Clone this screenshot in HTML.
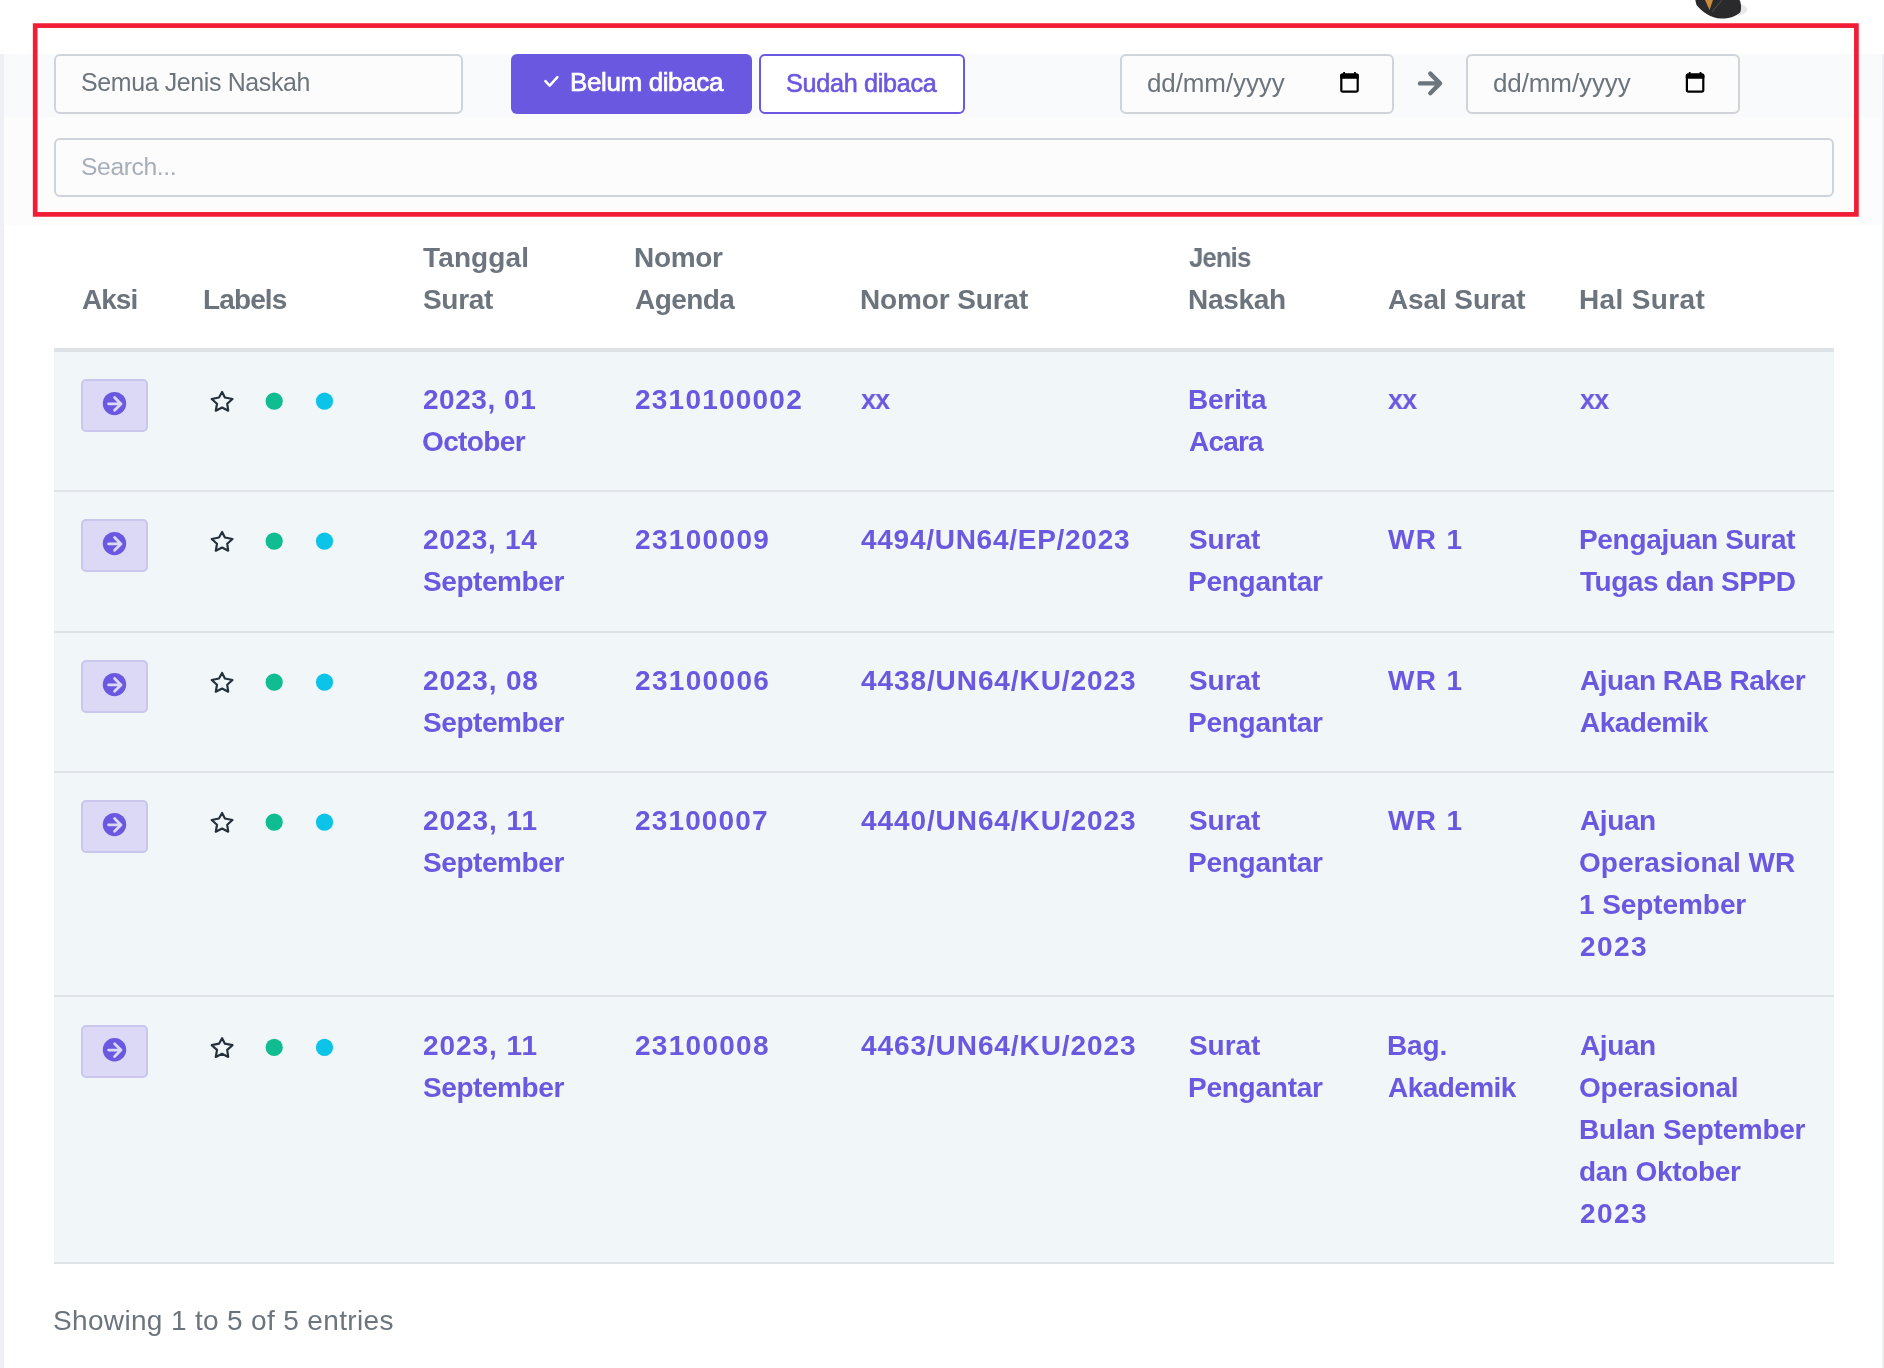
<!DOCTYPE html>
<html><head><meta charset="utf-8"><style>
html,body{margin:0;padding:0;background:#ffffff;}
#root{position:relative;width:1884px;height:1368px;overflow:hidden;background:#ffffff;font-family:"Liberation Sans",sans-serif;}
.t{position:absolute;white-space:nowrap;will-change:transform;}
.box{position:absolute;box-sizing:border-box;}
.ab{position:absolute;left:81px;width:67px;height:53px;box-sizing:border-box;border:2px solid #cac6ec;border-radius:5px;background:#dbd9f6;}
.rb{position:absolute;left:54px;width:1780px;height:2px;background:#dfe3e7;}
</style></head><body><div id="root">
<div class="box" style="left:0;top:54px;width:4px;height:1314px;background:#eef0f3"></div>
<div class="box" style="left:1882px;top:54px;width:2px;height:1314px;background:#eef0f3"></div>
<div class="box" style="left:4px;top:54px;width:1878px;height:63px;background:#f9fafb"></div>
<div class="box" style="left:4px;top:117px;width:1878px;height:108px;background:#fcfcfd"></div><div class="box" style="left:4px;top:225px;width:1878px;height:1143px;background:#ffffff"></div>
<div class="box" style="left:54px;top:54px;width:409px;height:60px;border:2px solid #ced4da;border-radius:6px;background:#fcfcfd"></div>
<div class="box" style="left:511px;top:54px;width:241px;height:60px;border-radius:6px;background:#6a58e0"></div>
<div class="box" style="left:759px;top:54px;width:206px;height:60px;border:2px solid #6a58e0;border-radius:6px;background:#ffffff"></div>
<div class="box" style="left:1120px;top:54px;width:274px;height:60px;border:2px solid #ced4da;border-radius:6px;background:#fcfcfd"></div>
<div class="box" style="left:1466px;top:54px;width:274px;height:60px;border:2px solid #ced4da;border-radius:6px;background:#fcfcfd"></div>
<div class="box" style="left:54px;top:138px;width:1780px;height:59px;border:2px solid #ced4da;border-radius:6px;background:#fcfcfd"></div>
<div class="box" style="left:54px;top:348px;width:1780px;height:4px;background:#dee2e6"></div>
<div class="box" style="left:54px;top:352px;width:1780px;height:910px;background:#f1f6f9"></div>
<div class="rb" style="top:490px"></div><div class="rb" style="top:631px"></div><div class="rb" style="top:771px"></div><div class="rb" style="top:995px"></div><div class="rb" style="top:1262px"></div>
<div class="ab" style="top:379.0px"></div><div class="ab" style="top:519.0px"></div><div class="ab" style="top:660.0px"></div><div class="ab" style="top:800.0px"></div><div class="ab" style="top:1025.2px"></div>
<svg width="1884" height="1368" style="position:absolute;left:0;top:0">
<g fill="none" stroke="#25303b" stroke-width="2.2" stroke-linejoin="round"><path d="M222.1 392.0 L224.9 397.5 L232.5 399.0 L227.2 403.7 L228.2 410.7 L222.1 407.6 L215.8 410.7 L217.0 403.7 L211.7 399.0 L219.0 397.5 Z"/><path d="M222.1 532.0 L224.9 537.5 L232.5 539.0 L227.2 543.7 L228.2 550.7 L222.1 547.6 L215.8 550.7 L217.0 543.7 L211.7 539.0 L219.0 537.5 Z"/><path d="M222.1 673.0 L224.9 678.5 L232.5 680.0 L227.2 684.7 L228.2 691.7 L222.1 688.6 L215.8 691.7 L217.0 684.7 L211.7 680.0 L219.0 678.5 Z"/><path d="M222.1 813.0 L224.9 818.5 L232.5 820.0 L227.2 824.7 L228.2 831.7 L222.1 828.6 L215.8 831.7 L217.0 824.7 L211.7 820.0 L219.0 818.5 Z"/><path d="M222.1 1038.2 L224.9 1043.7 L232.5 1045.2 L227.2 1049.9 L228.2 1056.9 L222.1 1053.8 L215.8 1056.9 L217.0 1049.9 L211.7 1045.2 L219.0 1043.7 Z"/></g>
<circle cx="274.2" cy="401.2" r="8.6" fill="#10bd90"/><circle cx="324.5" cy="401.2" r="8.6" fill="#0cc3e8"/><circle cx="274.2" cy="541.2" r="8.6" fill="#10bd90"/><circle cx="324.5" cy="541.2" r="8.6" fill="#0cc3e8"/><circle cx="274.2" cy="682.2" r="8.6" fill="#10bd90"/><circle cx="324.5" cy="682.2" r="8.6" fill="#0cc3e8"/><circle cx="274.2" cy="822.2" r="8.6" fill="#10bd90"/><circle cx="324.5" cy="822.2" r="8.6" fill="#0cc3e8"/><circle cx="274.2" cy="1047.4" r="8.6" fill="#10bd90"/><circle cx="324.5" cy="1047.4" r="8.6" fill="#0cc3e8"/>
<circle cx="114.5" cy="403.6" r="11.7" fill="#6a58e0"/><path d="M108.6 403.9 H121 M114.6 397.6 L121 403.9 L114.6 410.2" stroke="#dcd9f6" stroke-width="2.8" fill="none" stroke-linecap="round" stroke-linejoin="round"/><circle cx="114.5" cy="543.6" r="11.7" fill="#6a58e0"/><path d="M108.6 543.9 H121 M114.6 537.6 L121 543.9 L114.6 550.2" stroke="#dcd9f6" stroke-width="2.8" fill="none" stroke-linecap="round" stroke-linejoin="round"/><circle cx="114.5" cy="684.6" r="11.7" fill="#6a58e0"/><path d="M108.6 684.9 H121 M114.6 678.6 L121 684.9 L114.6 691.2" stroke="#dcd9f6" stroke-width="2.8" fill="none" stroke-linecap="round" stroke-linejoin="round"/><circle cx="114.5" cy="824.6" r="11.7" fill="#6a58e0"/><path d="M108.6 824.9 H121 M114.6 818.6 L121 824.9 L114.6 831.2" stroke="#dcd9f6" stroke-width="2.8" fill="none" stroke-linecap="round" stroke-linejoin="round"/><circle cx="114.5" cy="1049.8" r="11.7" fill="#6a58e0"/><path d="M108.6 1050.1 H121 M114.6 1043.8 L121 1050.1 L114.6 1056.4" stroke="#dcd9f6" stroke-width="2.8" fill="none" stroke-linecap="round" stroke-linejoin="round"/>
<path d="M545.4 81.2 L549.7 85.6 L557.4 77.2" stroke="#ffffff" stroke-width="2.5" fill="none" stroke-linecap="round" stroke-linejoin="round"/>
<g fill="none" stroke="#000" stroke-width="2.2">
<rect x="1341.3" y="74.6" width="16.4" height="17.1" rx="1.6"/>
<rect x="1686.9" y="74.6" width="16.4" height="17.1" rx="1.6"/>
</g>
<g fill="#000"><rect x="1340.2" y="73.6" width="18.6" height="5.2" rx="1.5"/><rect x="1343.2" y="72" width="1.8" height="3"/><rect x="1354" y="72" width="1.8" height="3"/>
<rect x="1685.8" y="73.6" width="18.6" height="5.2" rx="1.5"/><rect x="1688.8" y="72" width="1.8" height="3"/><rect x="1699.6" y="72" width="1.8" height="3"/></g>
<path d="M1420 83.4 H1439.5 M1430.3 73.6 L1440 83.4 L1430.3 93.2" stroke="#6c757d" stroke-width="4.4" fill="none" stroke-linecap="round" stroke-linejoin="round"/>
<g>
<path d="M1741 4 C1748 6 1749 11 1744 14 L1738 16 Z" fill="#d8d8d8" opacity="0.6"/>
<path d="M1695.3 0 L1739.5 0 C1741.5 4 1741.5 10 1740 12.5 C1735 17 1728 18.8 1721 18.6 C1711 18 1702 12 1696.5 5 Z" fill="#2a2a2c"/>
<path d="M1705 0 L1713 0 L1709.5 10 Z" fill="#c98a3c"/>
<path d="M1722 0 L1712 12" stroke="#5a5a5c" stroke-width="0.8"/>
</g>
</svg>
<div class="t" style="left:81.6px;top:278.8px;font-size:28.00px;line-height:42px;font-weight:bold;color:#6c757d;letter-spacing:-0.96px;">Aksi</div><div class="t" style="left:202.7px;top:278.8px;font-size:28.00px;line-height:42px;font-weight:bold;color:#6c757d;letter-spacing:-0.87px;">Labels</div><div class="t" style="left:422.7px;top:236.8px;font-size:28.00px;line-height:42px;font-weight:bold;color:#6c757d;letter-spacing:0.14px;">Tanggal</div><div class="t" style="left:422.7px;top:278.8px;font-size:28.00px;line-height:42px;font-weight:bold;color:#6c757d;letter-spacing:-0.31px;">Surat</div><div class="t" style="left:633.7px;top:236.8px;font-size:28.00px;line-height:42px;font-weight:bold;color:#6c757d;letter-spacing:-0.33px;">Nomor</div><div class="t" style="left:634.7px;top:278.8px;font-size:28.00px;line-height:42px;font-weight:bold;color:#6c757d;letter-spacing:-0.58px;">Agenda</div><div class="t" style="left:859.6px;top:278.8px;font-size:28.00px;line-height:42px;font-weight:bold;color:#6c757d;letter-spacing:-0.12px;">Nomor Surat</div><div class="t" style="left:1189.0px;top:236.8px;font-size:28.00px;line-height:42px;font-weight:bold;color:#6c757d;letter-spacing:-0.97px;transform:scaleX(0.9190);transform-origin:0 0;">Jenis</div><div class="t" style="left:1188.0px;top:278.8px;font-size:28.00px;line-height:42px;font-weight:bold;color:#6c757d;letter-spacing:-0.28px;">Naskah</div><div class="t" style="left:1388.2px;top:278.8px;font-size:28.00px;line-height:42px;font-weight:bold;color:#6c757d;letter-spacing:-0.11px;">Asal Surat</div><div class="t" style="left:1579.3px;top:278.8px;font-size:28.00px;line-height:42px;font-weight:bold;color:#6c757d;letter-spacing:0.35px;">Hal Surat</div><div class="t" style="left:423.3px;top:378.5px;font-size:28.00px;line-height:42px;font-weight:bold;color:#6a58e0;letter-spacing:0.54px;">2023, 01</div><div class="t" style="left:422.3px;top:420.5px;font-size:28.00px;line-height:42px;font-weight:bold;color:#6a58e0;letter-spacing:-0.63px;">October</div><div class="t" style="left:634.7px;top:378.5px;font-size:28.00px;line-height:42px;font-weight:bold;color:#6a58e0;letter-spacing:1.22px;">2310100002</div><div class="t" style="left:860.5px;top:378.5px;font-size:28.00px;line-height:42px;font-weight:bold;color:#6a58e0;letter-spacing:-0.85px;transform:scaleX(0.9601);transform-origin:0 0;">xx</div><div class="t" style="left:1188.2px;top:378.5px;font-size:28.00px;line-height:42px;font-weight:bold;color:#6a58e0;letter-spacing:-0.16px;">Berita</div><div class="t" style="left:1189.2px;top:420.5px;font-size:28.00px;line-height:42px;font-weight:bold;color:#6a58e0;letter-spacing:-0.82px;">Acara</div><div class="t" style="left:1388.2px;top:378.5px;font-size:28.00px;line-height:42px;font-weight:bold;color:#6a58e0;letter-spacing:-0.85px;transform:scaleX(0.9601);transform-origin:0 0;">xx</div><div class="t" style="left:1580.3px;top:378.5px;font-size:28.00px;line-height:42px;font-weight:bold;color:#6a58e0;letter-spacing:-0.85px;transform:scaleX(0.9601);transform-origin:0 0;">xx</div><div class="t" style="left:423.3px;top:518.5px;font-size:28.00px;line-height:42px;font-weight:bold;color:#6a58e0;letter-spacing:0.70px;">2023, 14</div><div class="t" style="left:423.3px;top:560.5px;font-size:28.00px;line-height:42px;font-weight:bold;color:#6a58e0;letter-spacing:-0.43px;">September</div><div class="t" style="left:634.7px;top:518.5px;font-size:28.00px;line-height:42px;font-weight:bold;color:#6a58e0;letter-spacing:1.33px;">23100009</div><div class="t" style="left:860.5px;top:518.5px;font-size:28.00px;line-height:42px;font-weight:bold;color:#6a58e0;letter-spacing:0.73px;">4494/UN64/EP/2023</div><div class="t" style="left:1189.2px;top:518.5px;font-size:28.00px;line-height:42px;font-weight:bold;color:#6a58e0;letter-spacing:-0.06px;">Surat</div><div class="t" style="left:1188.2px;top:560.5px;font-size:28.00px;line-height:42px;font-weight:bold;color:#6a58e0;letter-spacing:-0.25px;">Pengantar</div><div class="t" style="left:1388.2px;top:518.5px;font-size:28.00px;line-height:42px;font-weight:bold;color:#6a58e0;letter-spacing:1.32px;">WR 1</div><div class="t" style="left:1579.3px;top:518.5px;font-size:28.00px;line-height:42px;font-weight:bold;color:#6a58e0;letter-spacing:-0.32px;">Pengajuan Surat</div><div class="t" style="left:1580.3px;top:560.5px;font-size:28.00px;line-height:42px;font-weight:bold;color:#6a58e0;letter-spacing:-0.46px;">Tugas dan SPPD</div><div class="t" style="left:423.3px;top:659.5px;font-size:28.00px;line-height:42px;font-weight:bold;color:#6a58e0;letter-spacing:0.84px;">2023, 08</div><div class="t" style="left:423.3px;top:701.5px;font-size:28.00px;line-height:42px;font-weight:bold;color:#6a58e0;letter-spacing:-0.43px;">September</div><div class="t" style="left:634.7px;top:659.5px;font-size:28.00px;line-height:42px;font-weight:bold;color:#6a58e0;letter-spacing:1.33px;">23100006</div><div class="t" style="left:860.5px;top:659.5px;font-size:28.00px;line-height:42px;font-weight:bold;color:#6a58e0;letter-spacing:0.91px;">4438/UN64/KU/2023</div><div class="t" style="left:1189.2px;top:659.5px;font-size:28.00px;line-height:42px;font-weight:bold;color:#6a58e0;letter-spacing:-0.06px;">Surat</div><div class="t" style="left:1188.2px;top:701.5px;font-size:28.00px;line-height:42px;font-weight:bold;color:#6a58e0;letter-spacing:-0.25px;">Pengantar</div><div class="t" style="left:1388.2px;top:659.5px;font-size:28.00px;line-height:42px;font-weight:bold;color:#6a58e0;letter-spacing:1.32px;">WR 1</div><div class="t" style="left:1580.3px;top:659.5px;font-size:28.00px;line-height:42px;font-weight:bold;color:#6a58e0;letter-spacing:-0.45px;">Ajuan RAB Raker</div><div class="t" style="left:1580.3px;top:701.5px;font-size:28.00px;line-height:42px;font-weight:bold;color:#6a58e0;letter-spacing:-0.57px;">Akademik</div><div class="t" style="left:423.3px;top:799.5px;font-size:28.00px;line-height:42px;font-weight:bold;color:#6a58e0;letter-spacing:0.95px;">2023, 11</div><div class="t" style="left:423.3px;top:841.5px;font-size:28.00px;line-height:42px;font-weight:bold;color:#6a58e0;letter-spacing:-0.43px;">September</div><div class="t" style="left:634.7px;top:799.5px;font-size:28.00px;line-height:42px;font-weight:bold;color:#6a58e0;letter-spacing:1.14px;">23100007</div><div class="t" style="left:860.5px;top:799.5px;font-size:28.00px;line-height:42px;font-weight:bold;color:#6a58e0;letter-spacing:0.91px;">4440/UN64/KU/2023</div><div class="t" style="left:1189.2px;top:799.5px;font-size:28.00px;line-height:42px;font-weight:bold;color:#6a58e0;letter-spacing:-0.06px;">Surat</div><div class="t" style="left:1188.2px;top:841.5px;font-size:28.00px;line-height:42px;font-weight:bold;color:#6a58e0;letter-spacing:-0.25px;">Pengantar</div><div class="t" style="left:1388.2px;top:799.5px;font-size:28.00px;line-height:42px;font-weight:bold;color:#6a58e0;letter-spacing:1.32px;">WR 1</div><div class="t" style="left:1580.3px;top:799.5px;font-size:28.00px;line-height:42px;font-weight:bold;color:#6a58e0;letter-spacing:-0.39px;">Ajuan</div><div class="t" style="left:1579.3px;top:841.5px;font-size:28.00px;line-height:42px;font-weight:bold;color:#6a58e0;letter-spacing:0.00px;">Operasional WR</div><div class="t" style="left:1579.3px;top:883.5px;font-size:28.00px;line-height:42px;font-weight:bold;color:#6a58e0;letter-spacing:-0.08px;">1 September</div><div class="t" style="left:1580.3px;top:925.5px;font-size:28.00px;line-height:42px;font-weight:bold;color:#6a58e0;letter-spacing:1.43px;">2023</div><div class="t" style="left:423.3px;top:1024.7px;font-size:28.00px;line-height:42px;font-weight:bold;color:#6a58e0;letter-spacing:0.95px;">2023, 11</div><div class="t" style="left:423.3px;top:1066.7px;font-size:28.00px;line-height:42px;font-weight:bold;color:#6a58e0;letter-spacing:-0.43px;">September</div><div class="t" style="left:634.7px;top:1024.7px;font-size:28.00px;line-height:42px;font-weight:bold;color:#6a58e0;letter-spacing:1.28px;">23100008</div><div class="t" style="left:860.5px;top:1024.7px;font-size:28.00px;line-height:42px;font-weight:bold;color:#6a58e0;letter-spacing:0.91px;">4463/UN64/KU/2023</div><div class="t" style="left:1189.2px;top:1024.7px;font-size:28.00px;line-height:42px;font-weight:bold;color:#6a58e0;letter-spacing:-0.06px;">Surat</div><div class="t" style="left:1188.2px;top:1066.7px;font-size:28.00px;line-height:42px;font-weight:bold;color:#6a58e0;letter-spacing:-0.25px;">Pengantar</div><div class="t" style="left:1387.2px;top:1024.7px;font-size:28.00px;line-height:42px;font-weight:bold;color:#6a58e0;letter-spacing:-0.13px;">Bag.</div><div class="t" style="left:1388.2px;top:1066.7px;font-size:28.00px;line-height:42px;font-weight:bold;color:#6a58e0;letter-spacing:-0.57px;">Akademik</div><div class="t" style="left:1580.3px;top:1024.7px;font-size:28.00px;line-height:42px;font-weight:bold;color:#6a58e0;letter-spacing:-0.39px;">Ajuan</div><div class="t" style="left:1579.3px;top:1066.7px;font-size:28.00px;line-height:42px;font-weight:bold;color:#6a58e0;letter-spacing:-0.22px;">Operasional</div><div class="t" style="left:1579.3px;top:1108.7px;font-size:28.00px;line-height:42px;font-weight:bold;color:#6a58e0;letter-spacing:-0.27px;">Bulan September</div><div class="t" style="left:1579.3px;top:1150.7px;font-size:28.00px;line-height:42px;font-weight:bold;color:#6a58e0;letter-spacing:-0.29px;">dan Oktober</div><div class="t" style="left:1580.3px;top:1192.7px;font-size:28.00px;line-height:42px;font-weight:bold;color:#6a58e0;letter-spacing:1.43px;">2023</div><div class="t" style="left:53.2px;top:1299.7px;font-size:28.00px;line-height:42px;font-weight:normal;color:#6c757d;letter-spacing:0.34px;">Showing 1 to 5 of 5 entries</div><div class="t" style="left:81.1px;top:64.4px;font-size:24.95px;line-height:37px;font-weight:normal;color:#6c757d;letter-spacing:-0.37px;">Semua Jenis Naskah</div><div class="t" style="left:569.6px;top:63.3px;font-size:26.00px;line-height:39px;font-weight:normal;color:#ffffff;letter-spacing:-0.38px;-webkit-text-stroke:0.7px #ffffff;">Belum dibaca</div><div class="t" style="left:785.6px;top:64.1px;font-size:25.20px;line-height:38px;font-weight:normal;color:#6a58e0;letter-spacing:-0.29px;-webkit-text-stroke:0.6px #6a58e0;">Sudah dibaca</div><div class="t" style="left:1147.0px;top:63.6px;font-size:26.00px;line-height:39px;font-weight:normal;color:#6c757d;letter-spacing:-0.11px;">dd/mm/yyyy</div><div class="t" style="left:1492.7px;top:63.6px;font-size:26.00px;line-height:39px;font-weight:normal;color:#6c757d;letter-spacing:-0.11px;">dd/mm/yyyy</div><div class="t" style="left:81.1px;top:148.3px;font-size:24.69px;line-height:37px;font-weight:normal;color:#a6aeb7;letter-spacing:-0.41px;">Search...</div>
<svg width="1884" height="1368" style="position:absolute;left:0;top:0"><rect x="35.2" y="25.6" width="1821.2" height="188.8" fill="none" stroke="#f21c34" stroke-width="4.7"/></svg>
</div></body></html>
